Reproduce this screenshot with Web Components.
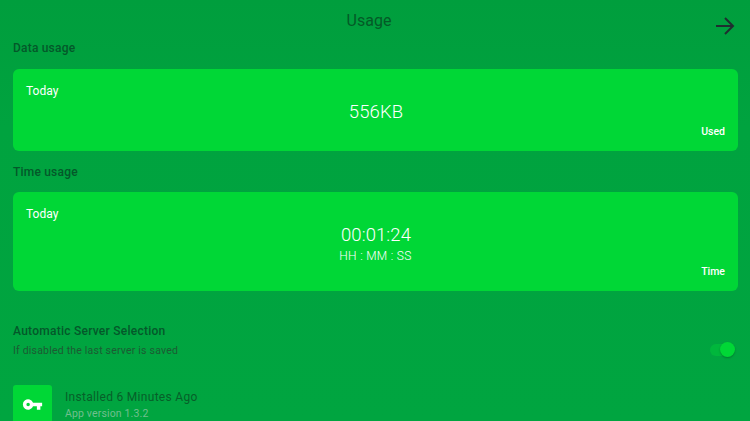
<!DOCTYPE html>
<html>
<head>
<meta charset="utf-8">
<style>
  html, body { margin: 0; padding: 0; height: 421px; overflow: hidden; background: #00a33f; font-family: Roboto, sans-serif; }
</style>
</head>
<body>
<usage-screen>
  <usage-card slot="data" value="556KB" label="Used"></usage-card>
  <usage-card slot="time" value="00:01:24" sub="HH : MM : SS" label="Time"></usage-card>
</usage-screen>
<script>
class UsageCard extends HTMLElement {
    constructor() {
        super();
        this.shadow = this.attachShadow({mode: 'open'});
        const sub = this.getAttribute('sub');
        this.shadow.innerHTML = `
        <style>
            :host { display: block; }
            .card {
                background: #00d736;
                border-radius: 6px;
                color: #fff;
                padding: 15px 13px 13px 13px;
                display: flex;
                flex-direction: column;
            }
            .today { font-size: 12px; line-height: 14px; }
            .value { text-align: center; font-size: 18.5px; font-weight: 300; line-height: 20px; margin-top: 4px; letter-spacing: .1px; padding-left: 1px; }
            .sub { text-align: center; font-size: 12px; font-weight: 300; line-height: 14px; margin-top: 4px; letter-spacing: .3px; }
            .label { text-align: right; font-size: 10.5px; font-weight: 500; line-height: 12px; margin-top: 4px; }
            .tall .label { margin-top: 3px; }
        </style>
        <div class="card ${sub ? 'tall' : ''}">
            <div class="today">Today</div>
            <div class="value">${this.getAttribute('value')}</div>
            ${sub ? `<div class="sub">${sub}</div>` : ''}
            <div class="label">${this.getAttribute('label')}</div>
        </div>`;
    }
}
customElements.define('usage-card', UsageCard);

class UsageScreen extends HTMLElement {
    constructor() {
        super();
        this.shadow = this.attachShadow({mode: 'open'});
        this.shadow.innerHTML = `
        <style>
            :host { display: block; height: 421px; overflow: hidden; position: relative;
                    background: linear-gradient(#009e3d, #00a33f 30%, #00a540); }
            .wrap { padding: 0 12px 0 13px; display: flex; flex-direction: column; }
            .title { height: 40px; box-sizing: border-box; padding: 1px 13px 0 0; display: flex; align-items: center; justify-content: center;
                     font-size: 16px; color: #045a27; }
            .arrow { position: absolute; top: 16px; right: 15px; }
            .section { font-size: 12px; font-weight: 500; color: #04582a; line-height: 16px; height: 16px; letter-spacing: .2px; }
            .gap-a { margin-bottom: 13px; }
            .gap-b { margin-top: 13px; margin-bottom: 12px; }
            .setting { display: flex; justify-content: space-between; margin-top: 33px; }
            .setting h3 { margin: 0; font-size: 12px; font-weight: 500; color: #04582a; line-height: 14px; letter-spacing: .25px; }
            .setting p { margin: 7px 0 0; font-size: 10.5px; color: #1d5a33; line-height: 12px; letter-spacing: .2px; }
            .toggle { position: relative; align-self: flex-end; width: 22px; height: 12px; margin: 0 6px 1px 0; background: #00b73c; border-radius: 6px; }
            .toggle i { position: absolute; right: -3px; top: -2px; width: 15px; height: 15px; border-radius: 50%;
                        background: #00d736; box-shadow: 0 1px 2px rgba(0,0,0,.25); }
            .about { display: flex; gap: 13px; margin-top: 28px; }
            .badge { width: 39px; height: 39px; border-radius: 3px; background: #00d736; flex: none;
                     display: flex; align-items: center; justify-content: center; }
            .about b { display: block; font-weight: 400; font-size: 12px; color: #075f29; line-height: 14px; margin-top: 5px; letter-spacing: .3px; }
            .about span { display: block; font-size: 10.5px; color: #70bf8e; line-height: 12px; margin-top: 4px; letter-spacing: .15px; }
        </style>
        <div class="wrap">
            <div class="title">Usage</div>
            <svg class="arrow" width="20" height="20" viewBox="0 0 20 20" fill="none" stroke="#1f2f30" stroke-width="2">
                <path d="M1 10H18M10 2l8 8-8 8"/>
            </svg>
            <div class="section gap-a">Data usage</div>
            <slot name="data"></slot>
            <div class="section gap-b">Time usage</div>
            <slot name="time"></slot>
            <div class="setting">
                <div>
                    <h3>Automatic Server Selection</h3>
                    <p>If disabled the last server is saved</p>
                </div>
                <div class="toggle"><i></i></div>
            </div>
            <div class="about">
                <div class="badge">
                    <svg width="21" height="21" viewBox="0 0 24 24" fill="#fff">
                        <path d="M12.65 10A6 6 0 1 0 12.65 14H17v4h4v-4h2v-4H12.65zM7 14a2 2 0 1 1 0-4 2 2 0 0 1 0 4z"/>
                    </svg>
                </div>
                <div>
                    <b>Installed 6 Minutes Ago</b>
                    <span>App version 1.3.2</span>
                </div>
            </div>
        </div>`;
    }
}
customElements.define('usage-screen', UsageScreen);
</script>
</body>
</html>
